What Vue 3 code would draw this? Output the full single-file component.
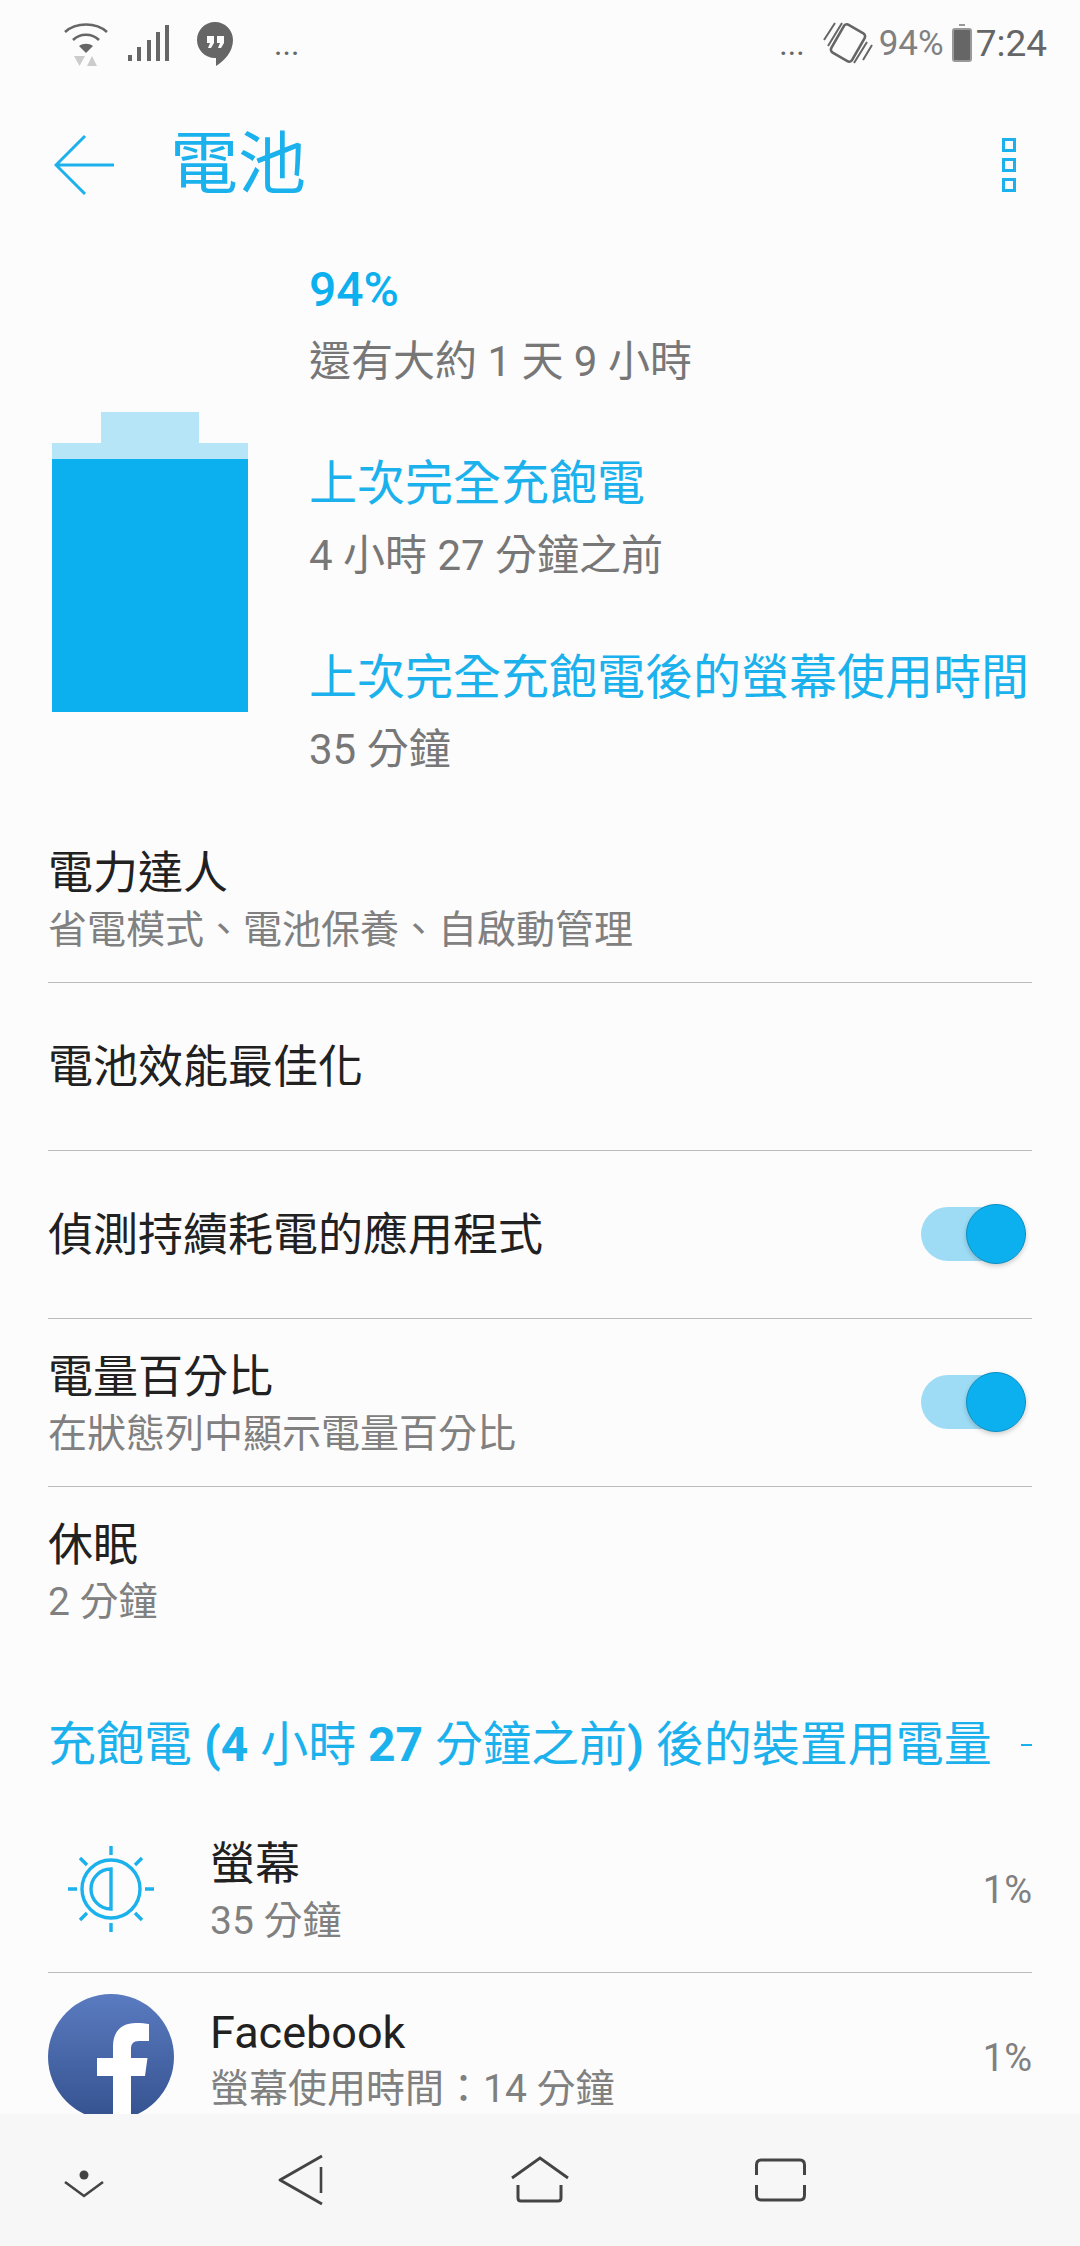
<template>
  <div class="phone">
    <div class="status-bar">
      <div class="status-left">
        <svg class="ic-wifi" width="48" height="48" viewBox="0 0 48 48">
          <path d="M3 12 C14 2 34 2 45 12" fill="none" stroke="#666" stroke-width="2.6" />
          <path d="M11 20 C18 13 30 13 37 20" fill="none" stroke="#666" stroke-width="2.6" />
          <path d="M17 26 C21 23 27 23 31 26 L24 33 Z" fill="#666" />
          <path d="M12 36 H23 L17.5 46 Z" fill="#ccc" />
          <path d="M25 46 H35 L30 36 Z" fill="#ccc" />
        </svg>
        <svg class="ic-signal" width="42" height="40" viewBox="0 0 42 40">
          <rect x="0" y="30" width="4" height="6" fill="#666" />
          <rect x="9" y="22" width="4" height="14" fill="#666" />
          <rect x="19" y="15" width="4" height="21" fill="#666" />
          <rect x="28" y="7" width="4" height="29" fill="#666" />
          <rect x="37" y="0" width="4" height="36" fill="#666" />
        </svg>
        <svg class="ic-hangouts" width="36" height="44" viewBox="0 0 36 44">
          <path d="M18 0 C28 0 36 8 36 18 C36 30 27 39 19 44 V36 H18 C8 36 0 28 0 18 C0 8 8 0 18 0 Z" fill="#666" />
          <path d="M10 14 H17 V21 L14 26 H11 L13 21 H10 Z M20 14 H27 V21 L24 26 H21 L23 21 H20 Z" fill="#fcfcfc" />
        </svg>
        <span class="dots">...</span>
      </div>
      <div class="status-right">
        <span class="dots">...</span>
        <svg class="ic-vibrate" width="50" height="46" viewBox="0 0 50 46">
          <rect x="13" y="7" width="24" height="32" rx="3.5" transform="rotate(30 25 23)" fill="none" stroke="#666" stroke-width="2.6" />
          <path d="M1 20 L12 3 M5 26 L19 3" fill="none" stroke="#666" stroke-width="2" />
          <path d="M31 43 L44 22 M40 40 L49 25" fill="none" stroke="#666" stroke-width="2" />
        </svg>
        <span class="pct">94%</span>
        <svg class="ic-battery" width="20" height="38" viewBox="0 0 20 38">
          <rect x="7" y="0" width="6" height="2" fill="#999" />
          <rect x="1" y="5" width="18" height="32" rx="2" fill="#666" stroke="#999" stroke-width="2" />
        </svg>
        <span class="clock">7:24</span>
      </div>
    </div>

    <div class="toolbar">
      <svg class="back" width="62" height="62" viewBox="0 0 62 62">
        <path d="M60 31 H3 M31 2 L2 31 L31 60" fill="none" stroke="#1ab1ec" stroke-width="3" />
      </svg>
      <h1 class="title">電池</h1>
      <div class="menu">
        <i></i>
        <i></i>
        <i></i>
      </div>
    </div>

    <div class="content">
      <div class="hero">
        <div class="battery">
          <div class="battery-tip"></div>
          <div class="battery-body"><div class="battery-fill"></div></div>
        </div>
        <div class="hero-text">
          <div class="hero-group">
            <div class="big-pct">94%</div>
            <div class="hero-sub">還有大約 1 天 9 小時</div>
          </div>
          <div class="hero-group">
            <div class="hero-head">上次完全充飽電</div>
            <div class="hero-sub">4 小時 27 分鐘之前</div>
          </div>
          <div class="hero-group">
            <div class="hero-head">上次完全充飽電後的螢幕使用時間</div>
            <div class="hero-sub">35 分鐘</div>
          </div>
        </div>
      </div>

      <div class="list">
        <div v-for="row in rows" :key="row.title" class="row" :class="{ last: row.last }">
          <div class="row-text">
            <div class="row-title">{{ row.title }}</div>
            <div v-if="row.sub" class="row-sub">{{ row.sub }}</div>
          </div>
          <div v-if="row.toggle" class="toggle"><span class="knob"></span></div>
        </div>
      </div>

      <div class="section-head">
        <span>充飽電 <b>(4</b> 小時 <b>27</b> 分鐘之前<b>)</b> 後的裝置用電量</span>
        <i class="dash"></i>
      </div>

      <div class="apps">
        <div class="app-row with-line">
          <div class="app-icon">
            <svg width="96" height="96" viewBox="0 0 96 96">
              <g fill="none" stroke="#1ab1ec" stroke-width="3.4">
                <circle cx="48" cy="48" r="29" />
                <path d="M48 28 A20 20 0 0 0 48 68 Z" />
                <path d="M48 5 V14 M48 82 V91 M5 48 H14 M82 48 H91 M17 17 L24 24 M79 17 L72 24 M17 79 L24 72 M79 79 L72 72" />
              </g>
            </svg>
          </div>
          <div class="app-text">
            <div class="row-title">螢幕</div>
            <div class="row-sub">35 分鐘</div>
          </div>
          <span class="usage">1%</span>
        </div>
        <div class="app-row">
          <div class="app-icon">
            <svg width="126" height="126" viewBox="0 0 126 126">
              <defs>
                <linearGradient id="fb" x1="0" y1="0" x2="0" y2="1">
                  <stop offset="0" stop-color="#5a7bc0" />
                  <stop offset="1" stop-color="#35528f" />
                </linearGradient>
                <clipPath id="fbc"><circle cx="63" cy="63" r="63" /></clipPath>
              </defs>
              <circle cx="63" cy="63" r="63" fill="url(#fb)" />
              <path clip-path="url(#fbc)" d="M83 126 V82 H97 L99.5 64 H83 V55 C83 50 85 47 91 47 H101 V30 C98 29.5 93 29 88 29 C74 29 65 37 65 52 V64 H49 V82 H65 V126 Z" fill="#fff" />
            </svg>
          </div>
          <div class="app-text">
            <div class="row-title">Facebook</div>
            <div class="row-sub">螢幕使用時間：14 分鐘</div>
          </div>
          <span class="usage">1%</span>
        </div>
      </div>
    </div>

    <div class="nav">
      <svg width="64" height="60" viewBox="0 0 64 60">
        <ellipse cx="32" cy="25" rx="4.5" ry="4.5" fill="#444" />
        <path d="M13 32 L32 46 L51 32" fill="none" stroke="#444" stroke-width="2.6" />
      </svg>
      <svg width="64" height="60" viewBox="0 0 64 60">
        <path d="M54 6 L12 30 L54 54" fill="none" stroke="#444" stroke-width="3" stroke-linejoin="round" />
        <path d="M53 17 V43" fill="none" stroke="#444" stroke-width="2.6" />
      </svg>
      <svg width="64" height="60" viewBox="0 0 64 60">
        <path d="M4 28 L32 8 L60 28" fill="none" stroke="#444" stroke-width="2.8" />
        <path d="M10 35 V48 Q10 51 13 51 H50 Q53 51 53 48 V35" fill="none" stroke="#444" stroke-width="3" />
      </svg>
      <svg width="64" height="60" viewBox="0 0 64 60">
        <path d="M8.5 25 V15 Q8.5 10 13 10 H52 Q56.5 10 56.5 15 V25" fill="none" stroke="#444" stroke-width="3" />
        <path d="M8.5 35 V45 Q8.5 50 13 50 H52 Q56.5 50 56.5 45 V35" fill="none" stroke="#444" stroke-width="3" />
      </svg>
    </div>
  </div>
</template>

<script setup>
const rows = [
  { title: '電力達人', sub: '省電模式、電池保養、自啟動管理' },
  { title: '電池效能最佳化' },
  { title: '偵測持續耗電的應用程式', toggle: true },
  { title: '電量百分比', sub: '在狀態列中顯示電量百分比', toggle: true },
  { title: '休眠', sub: '2 分鐘', last: true }
]
</script>

<style scoped>
.phone {
  width: 1080px;
  height: 2246px;
  display: flex;
  flex-direction: column;
  overflow: hidden;
  background: #fcfcfc;
  font-family: Roboto, "Noto Sans CJK TC", sans-serif;
  color: #212121;
}

.status-bar {
  height: 76px;
  flex: none;
  display: flex;
  justify-content: space-between;
  align-items: flex-start;
  padding: 0 33px 0 62px;
}

.status-left,
.status-right {
  display: flex;
  align-items: flex-start;
}

.ic-wifi {
  margin-top: 20px;
}

.ic-signal {
  margin: 25px 0 0 18px;
}

.ic-hangouts {
  margin: 22px 0 0 27px;
}

.status-left .dots {
  margin-left: 41px;
}

.dots {
  font-size: 32px;
  line-height: 36px;
  margin-top: 26px;
  color: #666;
}

.ic-vibrate {
  margin: 20px 0 0 18px;
}

.pct {
  margin: 22px 0 0 6px;
  font-size: 35px;
  line-height: 44px;
  color: #808080;
}

.ic-battery {
  margin: 24px 0 0 8px;
}

.clock {
  margin: 22px 0 0 4px;
  font-size: 37px;
  line-height: 44px;
  color: #666;
}

.toolbar {
  height: 178px;
  flex: none;
  display: flex;
  align-items: center;
  padding: 0 64px 0 54px;
}

.back {
  flex: none;
}

.title {
  margin: 0 0 0 54px;
  flex: 1;
  font-size: 68px;
  font-weight: 400;
  line-height: 80px;
  color: #1ab1ec;
}

.menu {
  display: flex;
  flex-direction: column;
  gap: 6px;
}

.menu i {
  display: block;
  width: 14px;
  height: 14px;
  box-sizing: border-box;
  border: 3px solid #1ab1ec;
}

.content {
  flex: 1;
  min-height: 0;
  overflow: hidden;
}

.hero {
  display: flex;
  padding-left: 52px;
}

.battery {
  width: 196px;
  margin-top: 158px;
  flex: none;
  display: flex;
  flex-direction: column;
  align-items: center;
}

.battery-tip {
  width: 98px;
  height: 31px;
  background: #b5e5f7;
}

.battery-body {
  width: 196px;
  height: 269px;
  padding-top: 16px;
  box-sizing: border-box;
  background: #b5e5f7;
}

.battery-fill {
  height: 100%;
  background: #0cb0ef;
}

.hero-text {
  margin-left: 61px;
  display: flex;
  flex-direction: column;
  gap: 50px;
}

.big-pct {
  font-size: 48px;
  font-weight: 500;
  line-height: 72px;
  color: #0cb0ef;
}

.hero-head {
  font-size: 48px;
  line-height: 72px;
  color: #1ab1ec;
  white-space: nowrap;
}

.hero-sub {
  font-size: 42px;
  line-height: 72px;
  color: #777;
}

.list {
  margin: 29px 48px 0;
}

.row {
  height: 168px;
  box-sizing: border-box;
  padding-top: 2px;
  border-bottom: 1px solid #bbb;
  display: flex;
  align-items: center;
  justify-content: space-between;
}

.row.last {
  border-bottom: none;
}

.row-title {
  font-size: 45px;
  line-height: 60px;
  color: #212121;
}

.row-sub {
  font-size: 39px;
  line-height: 52px;
  color: #808080;
}

.toggle {
  position: relative;
  width: 96px;
  height: 54px;
  margin: 0 15px 3px 0;
  border-radius: 27px;
  background: #9edcf6;
}

.knob {
  position: absolute;
  top: -3px;
  right: -9px;
  width: 60px;
  height: 60px;
  box-sizing: border-box;
  border: 1px solid #0a8fc4;
  border-radius: 50%;
  background: #0cb0ef;
  box-shadow: 0 2px 5px rgba(0, 0, 0, 0.2);
}

.section-head {
  margin: 0 48px;
  padding: 60px 0 30px;
  display: flex;
  align-items: center;
  justify-content: space-between;
  font-size: 48px;
  line-height: 60px;
  color: #1ab1ec;
  white-space: nowrap;
}

.section-head b {
  font-weight: 700;
}

.dash {
  width: 11px;
  height: 2px;
  background: #1ab1ec;
}

.apps {
  margin: 0 48px;
}

.app-row {
  height: 168px;
  box-sizing: border-box;
  display: flex;
  align-items: center;
}

.app-row.with-line {
  border-bottom: 1px solid #bbb;
}

.app-icon {
  width: 126px;
  flex: none;
  display: flex;
  justify-content: center;
}

.app-text {
  margin: 4px 0 0 36px;
  flex: 1;
}

.usage {
  margin-top: 2px;
  font-size: 38px;
  color: #808080;
}

.nav {
  height: 132px;
  flex: none;
  display: grid;
  grid-template-columns: 168px 264px 216px 264px;
  justify-items: center;
  align-items: center;
  background: #f7f7f7;
}
</style>
